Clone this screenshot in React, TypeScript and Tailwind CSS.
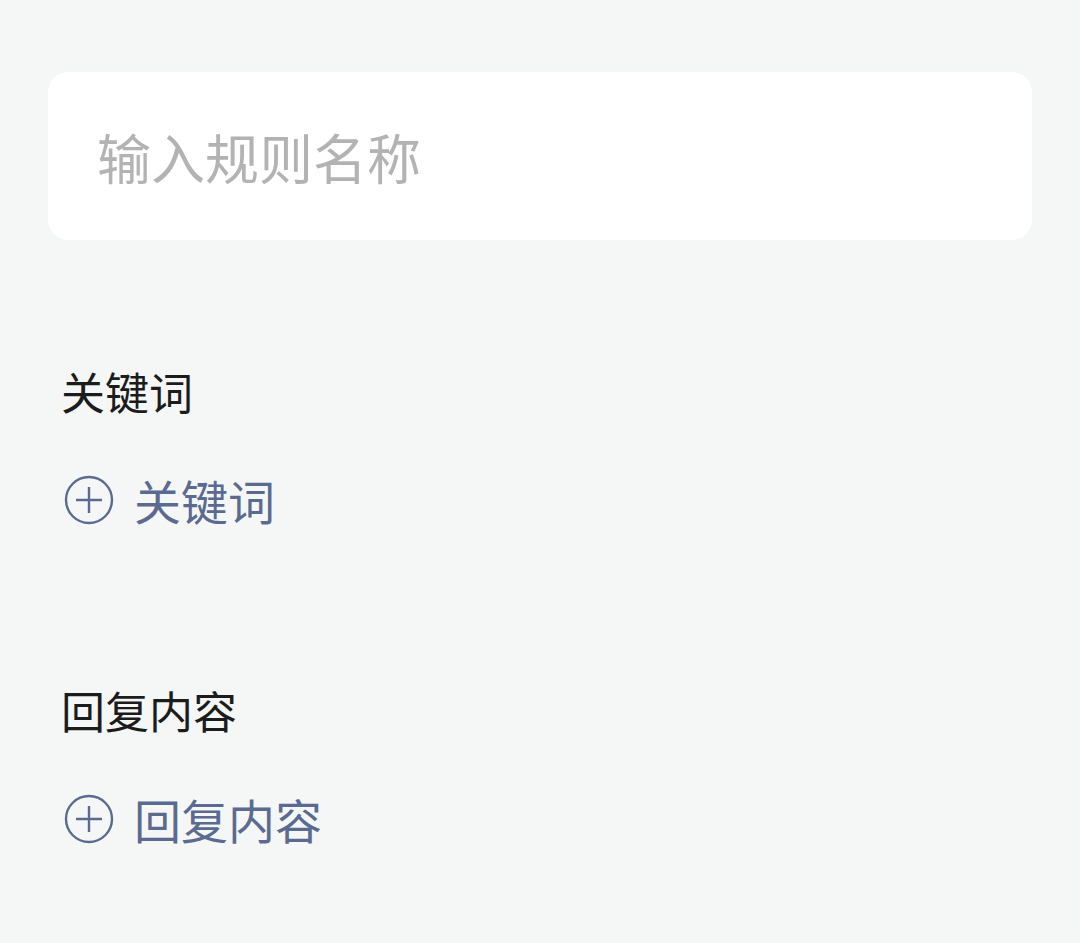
import { useState } from 'react'

function PlusCircle() {
  return (
    <svg aria-hidden width="50" height="50" viewBox="0 0 50 50" fill="none" stroke="currentColor" strokeWidth="2.4">
      <circle cx="25" cy="25" r="23" />
      <path d="M12 25h26M25 12v26" />
    </svg>
  )
}

function Section({ title, action }: { title: string; action: string }) {
  return (
    <div className="flex flex-col">
      <div className="h-[60px] pl-[61px] text-[44px] leading-[60px] text-[#1c1c1c]">{title}</div>
      <button className="mt-[49px] flex h-[60px] items-center gap-[20px] pl-[64px] text-left text-[#5b6a91]">
        <PlusCircle />
        <span className="text-[47px] leading-[60px]">{action}</span>
      </button>
    </div>
  )
}

export default function App() {
  const [name, setName] = useState('')
  return (
    <div
      className="min-h-[943px] w-full bg-[#f5f7f7] pt-[72px]"
      style={{ fontFamily: '"Noto Sans CJK SC", "Noto Sans", sans-serif' }}
    >
      <div className="mx-[48px] flex h-[168px] items-center rounded-[20px] bg-white pl-[49px] pr-[30px]">
        <input
          value={name}
          onChange={e => setName(e.target.value)}
          placeholder="输入规则名称"
          className="w-full bg-transparent text-[54px] text-[#222] outline-none placeholder:text-[#b3b3b3]"
        />
      </div>
      <div className="mt-[121px]">
        <Section title="关键词" action="关键词" />
      </div>
      <div className="mt-[150px]">
        <Section title="回复内容" action="回复内容" />
      </div>
    </div>
  )
}
